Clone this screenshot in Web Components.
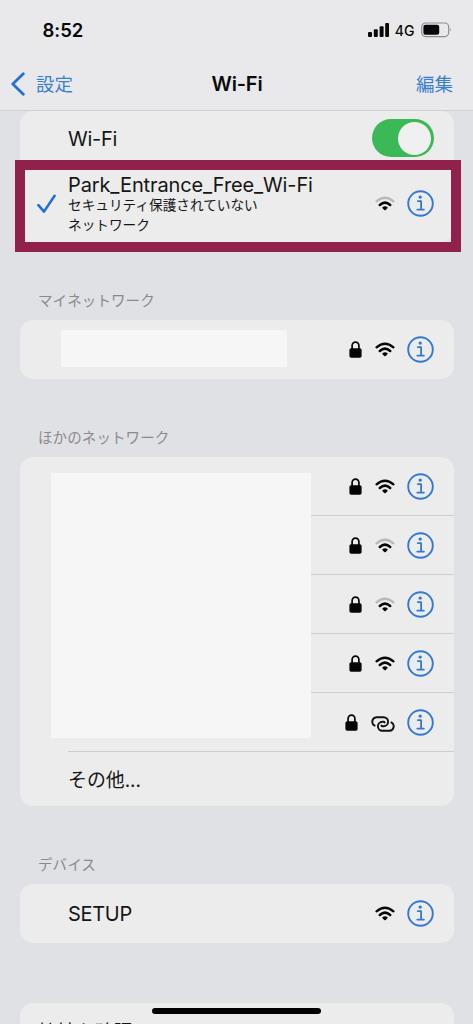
<!DOCTYPE html>
<html lang="ja">
<head>
<meta charset="utf-8">
<title>Wi-Fi</title>
<style>
html,body{margin:0;height:1024px;overflow:hidden;background:#e0e1e5}
body{font-family:Inter,"Noto Sans CJK JP",sans-serif;color:#151515}
</style>
</head>
<body>
<wifi-screen></wifi-screen>
<script>
const define = (name, html, setup) => {
  const t = document.createElement('template');
  t.innerHTML = html;
  customElements.define(name, class extends HTMLElement {
    constructor() {
      super();
      this.attachShadow({mode: 'open'}).append(t.content.cloneNode(true));
    }
    connectedCallback() { if (setup) setup(this, this.shadowRoot); }
  });
};

define('status-bar', `
<style>
:host{display:flex;box-sizing:border-box;height:57px;padding:20px 21.5px 0 42.5px;align-items:flex-start;color:#080808}
.time{font-size:18.5px;line-height:21px;font-weight:600;letter-spacing:-.05px;flex:1}
.net{font-size:14px;line-height:21px;font-weight:500;margin:0 6px 0 6px;letter-spacing:0}
svg{display:block}
</style>
<span class="time">8:52</span>
<svg width="21" height="17" viewBox="0 0 21 17"><g fill="#080808"><rect x="0" y="12" width="4" height="5" rx="1"/><rect x="5.8" y="9.2" width="4" height="7.8" rx="1"/><rect x="11.6" y="6.2" width="4" height="10.8" rx="1"/><rect x="17.2" y="3" width="3.8" height="14" rx="1"/></g></svg>
<span class="net">4G</span>
<svg width="31" height="18" viewBox="0 0 31 18"><rect x=".7" y="3" width="27" height="13.6" rx="4" fill="none" stroke="#8d8d90" stroke-width="1.2"/><rect x="2.4" y="4.8" width="15.8" height="10" rx="2" fill="#080808"/><path d="M29 8q1.7 1.8 0 3.7z" fill="#8d8d90"/></svg>
`);

define('nav-bar', `
<style>
:host{display:block;box-sizing:border-box;height:111px;background:#e9e9eb;border-bottom:1px solid #cfcfd4}
.bar{display:grid;grid-template-columns:1fr auto 1fr;align-items:center;height:53px;padding:0 20px 0 10px}
.back{display:flex;align-items:center;gap:10px}
.link{color:#3a80d0;font-size:18.5px;line-height:26px}
.edit{text-align:right}
.title{font-size:20px;font-weight:600;color:#0b0b0b;letter-spacing:-.2px;margin:0 -10px 0 0;padding-left:1px}
svg{display:block}
</style>
<status-bar></status-bar>
<div class="bar"><span class="back"><svg width="16" height="24" viewBox="0 0 16 24"><path d="M13.3 1.8 2.8 12l10.5 10.2" fill="none" stroke="#2670d5" stroke-width="2.8" stroke-linecap="round" stroke-linejoin="round"/></svg><span class="link"><slot name="back"></slot></span></span>
<span class="title"><slot></slot></span><span class="link edit"><slot name="edit"></slot></span></div>
`);

define('toggle-switch', `
<style>
:host{display:flex;justify-content:flex-end;box-sizing:border-box;width:62px;height:38px;padding:2.5px;border-radius:19px;background:#3cb957}
i{width:33px;height:33px;border-radius:50%;background:#f0f0f0}
</style><i></i>`);

define('lock-icon', `
<style>:host{display:block}svg{display:block}</style>
<svg width="13" height="17" viewBox="0 0 13 17"><path d="M3.1 8V4.8a3.4 3.7 0 0 1 6.8 0V8" fill="none" stroke="#050505" stroke-width="1.7"/><rect x=".4" y="7.2" width="12.2" height="9.6" rx="1.7" fill="#050505"/></svg>`);

define('signal-icon', `
<style>:host{display:block;--outer:#070707}:host([weak]){--outer:#b9b9b9}svg{display:block}</style>
<svg width="20" height="15" viewBox="0 0 20 15"><path d="M1.6 5.3Q10-1.8 18.4 5.3" fill="none" stroke="var(--outer)" stroke-width="2.4" stroke-linecap="round"/><path d="M4.8 8.9Q10 4.5 15.2 8.9" fill="none" stroke="#070707" stroke-width="2.6" stroke-linecap="round"/><path d="M7.2 11.4Q10 9.2 12.8 11.4Q12.7 12.2 10.7 14Q10 14.5 9.3 14Q7.3 12.2 7.2 11.4Z" fill="#070707"/></svg>`);

define('link-icon', `
<style>:host{display:block}svg{display:block}</style>
<svg width="24" height="16" viewBox="0 0 24 16" fill="none" stroke="#111" stroke-width="1.9" stroke-linecap="round"><path d="M3.6 9.6A4.5 4.5 0 0 1 5.4 1.2H12.6A4.5 4.5 0 0 1 12.6 10.2H11.6Q10.6 10.2 10.4 9.6"/><path d="M20.4 6.4A4.5 4.5 0 0 1 18.6 14.8H11.4A4.5 4.5 0 0 1 11.4 5.8H12.4Q13.4 5.8 13.6 6.4"/></svg>`);

define('info-icon', `
<style>:host{display:block}svg{display:block}</style>
<svg width="27" height="27" viewBox="0 0 27 27"><circle cx="13.5" cy="13.5" r="12.3" fill="none" stroke="#3279d2" stroke-width="1.9"/><circle cx="13.2" cy="7.1" r="1.7" fill="#3279d2"/><path d="M10.9 11.2h3.2v8.4M10.3 19.6h6.6" fill="none" stroke="#3279d2" stroke-width="1.8" stroke-linecap="round" stroke-linejoin="round"/></svg>`);

define('network-row', `
<style>
:host{display:flex;box-sizing:border-box;height:59px;padding:0 20px 0 0;align-items:center;--line:transparent}
:host([line]){--line:#cfcfd1}
.check{width:48.5px;display:flex;padding-left:17px;box-sizing:border-box}
.body{flex:1;display:flex;align-items:center;height:100%;box-sizing:border-box;border-bottom:1px solid var(--line);margin-right:-20px;padding-right:20px}
.text{flex:1;font-size:20px;line-height:28px;padding-top:2px}
.icons{display:flex;align-items:center}
lock-icon{margin-right:13px}
signal-icon,link-icon{margin-right:12px}
link-icon{margin-top:3px}
svg{display:block}
</style>
<div class="check"></div><div class="body"><div class="text"><slot></slot></div><div class="icons"></div></div>`,
(el, root) => {
  const kind = el.getAttribute('signal');
  const parts = [];
  if (el.hasAttribute('locked')) parts.push('<lock-icon></lock-icon>');
  if (kind === 'link') parts.push('<link-icon></link-icon>');
  else if (kind) parts.push('<signal-icon ' + (kind === 'weak' ? 'weak' : '') + '></signal-icon>');
  if (kind) parts.push('<info-icon></info-icon>');
  root.querySelector('.icons').innerHTML = parts.join('') + '<slot name="end"></slot>';
  if (el.hasAttribute('checked')) root.querySelector('.check').innerHTML =
    '<svg width="20" height="20" viewBox="0 0 20 20"><path d="M1.4 11.2 7 17.6 17.6 1.8" fill="none" stroke="#1f6fd8" stroke-width="2.6" stroke-linecap="round" stroke-linejoin="round"/></svg>';
});

define('settings-group', `
<style>
:host{display:block;margin:0 19.5px}
.card{background:#ececec;border-radius:13px;position:relative}
.head{display:block;box-sizing:border-box;height:78px;padding:48px 0 0 18.5px;font-size:14.5px;line-height:22px;color:#8a8a8e;letter-spacing:.1px}
:host(:not([headed])) .head{display:none}
</style>
<div class="head"><slot name="head"></slot></div><div class="card"><slot></slot></div>`);

define('wifi-screen', `
<style>
:host{display:block;height:1024px;overflow:hidden;position:relative}
.toggle{height:55px}
.joined{height:76px}
.joined .name{display:block;line-height:22px;letter-spacing:-.12px}
.joined small{display:block;font-size:13.65px;line-height:19.5px}
.mark{position:absolute;left:15px;top:160px;width:446px;height:92px;box-sizing:border-box;border:10.5px solid #90214c}
.cover{position:absolute;background:#f6f6f6}
.home{position:absolute;left:152px;top:1008px;width:169px;height:6px;border-radius:3px;background:#000}
.last{margin-top:60px}
.ask{height:58px}
.grey{color:#8a8a8e;font-size:18.5px;margin-right:3px}
.jp{font-size:18.9px}
</style>
<nav-bar><span slot="back">設定</span>Wi-Fi<span slot="edit">編集</span></nav-bar>
<settings-group><network-row class="toggle"><span style="letter-spacing:-.25px">Wi-Fi</span><toggle-switch slot="end"></toggle-switch></network-row>
<network-row class="joined" checked signal="weak"><span class="name">Park_Entrance_Free_Wi-Fi</span><small>セキュリティ保護されていない<br>ネットワーク</small></network-row></settings-group>
<settings-group headed><span slot="head">マイネットワーク</span><network-row locked signal="full"></network-row><div class="cover" style="left:41px;top:10px;width:226px;height:37px"></div></settings-group>
<settings-group headed><span slot="head">ほかのネットワーク</span>
<network-row line locked signal="full"></network-row><network-row line locked signal="weak"></network-row><network-row line locked signal="weak"></network-row><network-row line locked signal="full"></network-row><network-row line locked signal="link"></network-row><network-row style="height:54px"><span class="jp" style="position:relative;top:1px">その他...</span></network-row>
<div class="cover" style="left:31px;top:16px;width:260px;height:265px"></div></settings-group>
<settings-group headed><span slot="head">デバイス</span><network-row signal="full"><span style="letter-spacing:-.3px">SETUP</span></network-row></settings-group>
<settings-group class="last"><network-row class="ask"><span class="jp" style="margin-left:-30px">接続を確認</span><span slot="end" class="grey">通知</span></network-row></settings-group>
<div class="mark"></div><div class="home"></div>
`);
</script>
</body>
</html>
